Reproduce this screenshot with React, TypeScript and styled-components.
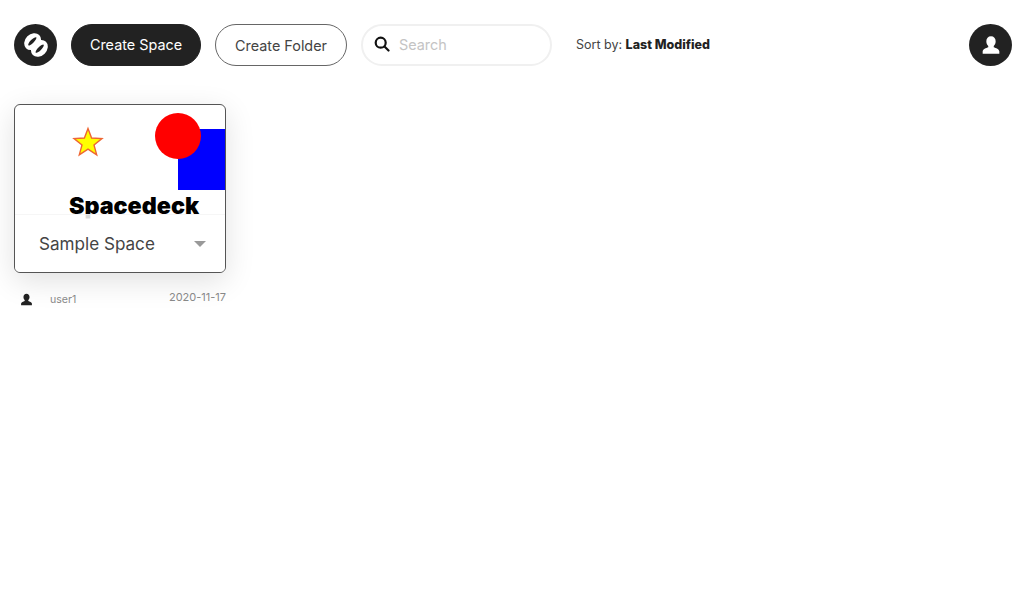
import React from "react";
import styled, { createGlobalStyle } from "styled-components";

const Global = createGlobalStyle`
  html, body { margin: 0; padding: 0; background: #fff; }
  body { font-family: Inter, "Liberation Sans", sans-serif; color: #222; }
`;

const Page = styled.div`
  width: 1024px;
  height: 597px;
  overflow: hidden;
  background: #fff;
`;

const Toolbar = styled.header`
  display: flex;
  align-items: center;
  height: 42px;
  padding: 24px 12px 0 14px;
`;

const RoundButton = styled.div`
  width: 43px;
  height: 42px;
  border-radius: 50%;
  background: #222;
  display: flex;
  align-items: center;
  justify-content: center;
  flex: none;
`;

const PillButton = styled.button<{ $primary?: boolean; $w: number }>`
  box-sizing: border-box;
  width: ${(p) => p.$w}px;
  height: 42px;
  margin-left: 14px;
  border-radius: 21px;
  border: 1px solid ${(p) => (p.$primary ? "#222" : "#666")};
  background: ${(p) => (p.$primary ? "#222" : "#fff")};
  color: ${(p) => (p.$primary ? "#fff" : "#444")};
  font: 400 14.4px Inter, "Liberation Sans", sans-serif;
  padding: 0 0 ${(p) => (p.$primary ? 2 : 0)}px;
  flex: none;
`;

const SearchBox = styled.div`
  box-sizing: border-box;
  width: 191px;
  height: 42px;
  margin-left: 14px;
  border: 2px solid #f0f0f0;
  border-radius: 21px;
  display: flex;
  align-items: center;
  padding: 0 0 2px 11px;
  gap: 9px;
  flex: none;
`;

const SearchText = styled.span`
  font-size: 14.4px;
  color: #c4c4c4;
`;

const Sort = styled.div`
  margin-left: 24px;
  padding-bottom: 2px;
  font-size: 12.5px;
  color: #444;
  flex: 1;
`;

const SortValue = styled.b`
  font-weight: 800;
  color: #222;
`;

const Content = styled.main`
  padding: 38px 0 0 14px;
  width: 212px;
`;

const Card = styled.article`
  box-sizing: border-box;
  width: 212px;
  height: 169px;
  border: 1px solid #555;
  border-radius: 6px;
  background: #fff;
  box-shadow: 0 8px 30px rgba(0, 0, 0, 0.12);
  overflow: hidden;
`;

const Thumb = styled.svg`
  display: block;
  width: 210px;
  height: 109px;
  overflow: visible;
`;

const CardFooter = styled.div`
  position: relative;
  box-sizing: border-box;
  display: flex;
  align-items: center;
  justify-content: space-between;
  height: 58px;
  padding: 0 19px 0 24px;
  background: rgba(255, 255, 255, 0.85);
  border-top: 1px solid rgba(240, 240, 240, 0.6);
`;

const Title = styled.span`
  font-size: 17.1px;
  color: #444;
`;

const Caret = styled.span`
  width: 0;
  height: 0;
  border-left: 6px solid transparent;
  border-right: 6px solid transparent;
  border-top: 6px solid #999;
`;

const Meta = styled.div`
  display: flex;
  justify-content: space-between;
  margin-top: 17px;
  font-size: 10.6px;
  color: #888;
`;

const Owner = styled.div`
  display: flex;
  align-items: center;
  gap: 17px;
  padding: 3px 0 0 6px;
`;

const DateText = styled.span`
  font-size: 11px;
  line-height: 14px;
`;

const UserIcon = ({ size, color }: { size: number; color: string }) => (
  <svg width={size} height={size} viewBox="0 0 24 24" fill={color}>
    <path d="M12 1.5c-3.4 0-5.6 2.5-5.6 5.9 0 2.3.9 4.4 2.3 5.7v1.5c-2.5 1-6.700 2.300-6.700 5v3h20v-3c0-2.700-4.200-4-6.700-5v-1.500c1.400-1.300 2.300-3.400 2.300-5.700 0-3.400-2.200-5.900-5.600-5.900z" />
  </svg>
);

export default function App() {
  return (
    <Page>
      <Global />
      <Toolbar>
        <RoundButton>
          <svg width="30" height="30" viewBox="0 0 30 30">
            <g transform="rotate(45 15 15)">
              <ellipse cx="10.200" cy="15" rx="7.400" ry="9.300" fill="#fff" />
              <ellipse cx="19.800" cy="15" rx="7.400" ry="9.300" fill="#fff" />
              <ellipse cx="9.800" cy="15" rx="1.700" ry="5.600" fill="#222" />
              <ellipse cx="20.200" cy="15" rx="1.700" ry="5.600" fill="#222" />
            </g>
          </svg>
        </RoundButton>
        <PillButton $primary $w={130}>Create Space</PillButton>
        <PillButton $w={132}>Create Folder</PillButton>
        <SearchBox>
          <svg width="16" height="16" viewBox="0 0 16 16" fill="none" stroke="#111" strokeWidth="2.200" strokeLinecap="round">
            <circle cx="6.700" cy="6.700" r="5" />
            <path d="M10.500 10.500 14.500 14.500" />
          </svg>
          <SearchText>Search</SearchText>
        </SearchBox>
        <Sort>
          Sort by: <SortValue>Last Modified</SortValue>
        </Sort>
        <RoundButton>
          <UserIcon size={20} color="#fff" />
        </RoundButton>
      </Toolbar>
      <Content>
        <Card>
          <Thumb viewBox="0 0 210 109">
            <rect x="163" y="24" width="47" height="61" fill="#0000ff" />
            <circle cx="163" cy="31" r="23" fill="#ff0000" />
            <polygon
              points="73,23.500 76.600,33 87,33.500 79,40 81.700,49.800 73,44.200 64.300,49.800 67,40 59,33.500 69.400,33"
              fill="#ffff00"
              stroke="#ee6633"
              strokeWidth="1.400"
            />
            <text x="119" y="108.500" textAnchor="middle" fontFamily="Inter, sans-serif" fontWeight="900" fontSize="23.300" fill="#000">
              Spacedeck
            </text>
          </Thumb>
          <CardFooter>
            <Title>Sample Space</Title>
            <Caret />
          </CardFooter>
        </Card>
        <Meta>
          <Owner>
            <UserIcon size={13} color="#222" />
            <span>user1</span>
          </Owner>
          <DateText>2020-11-17</DateText>
        </Meta>
      </Content>
    </Page>
  );
}
